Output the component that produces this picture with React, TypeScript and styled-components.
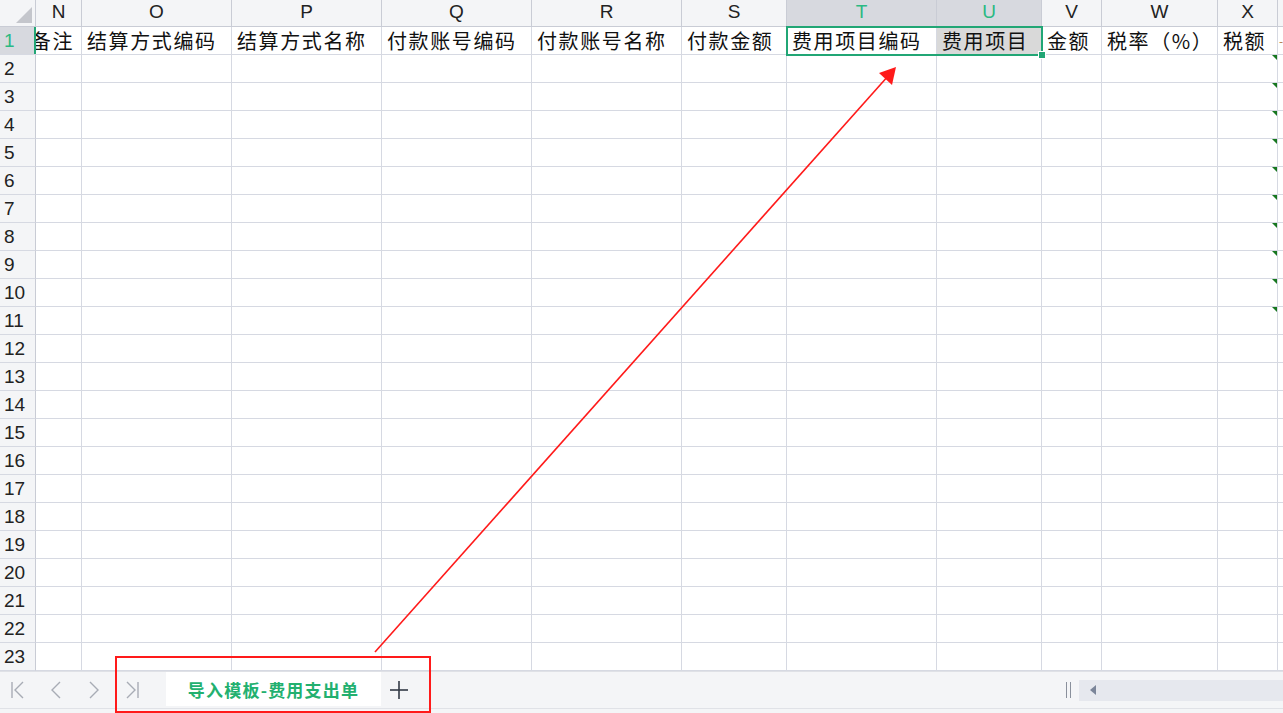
import React from 'react';
import styled, { createGlobalStyle } from 'styled-components';

const GlobalStyle = createGlobalStyle`
  html, body {
    margin: 0;
    padding: 0;
    background: #ffffff;
    overflow: hidden;
  }
`;

const GRID = '#d6d9e2';
const HEAD_BG = '#f4f5f7';
const SEL_HEAD_BG = '#d7d9df';
const GREEN = '#21a675';
const GREEN_TEXT = '#2bb983';

const columns = [
  { key: 'N', width: 46, title: '备注', clipLeft: true },
  { key: 'O', width: 150, title: '结算方式编码' },
  { key: 'P', width: 150, title: '结算方式名称' },
  { key: 'Q', width: 150, title: '付款账号编码' },
  { key: 'R', width: 150, title: '付款账号名称' },
  { key: 'S', width: 105, title: '付款金额' },
  { key: 'T', width: 150, title: '费用项目编码', selected: true },
  { key: 'U', width: 105, title: '费用项目', selected: true, shaded: true },
  { key: 'V', width: 60, title: '金额' },
  { key: 'W', width: 116, title: '税率（%）' },
  { key: 'X', width: 60, title: '税额', flagged: true },
  { key: 'Y', width: 40, title: '-', edge: true },
];

const Page = styled.div`
  position: relative;
  width: 1283px;
  height: 713px;
  overflow: hidden;
  display: flex;
  flex-direction: column;
  background: #ffffff;
`;

const SheetWrap = styled.div`
  position: relative;
  height: 671px;
  overflow: hidden;
`;

const Sheet = styled.div`
  display: grid;
  grid-template-columns: 36px ${columns.map((c) => `${c.width}px`).join(' ')};
  grid-template-rows: 27px repeat(23, 28px);
`;

const Corner = styled.div`
  position: relative;
  background: ${HEAD_BG};
  border-right: 1px solid #c9ccd5;
  border-bottom: 1px solid #c9ccd5;
  box-sizing: border-box;

  &::after {
    content: '';
    position: absolute;
    right: 3px;
    bottom: 3px;
    border-left: 16px solid transparent;
    border-bottom: 16px solid #c4c6cc;
  }
`;

const ColHead = styled.div<{ $selected?: boolean }>`
  display: flex;
  align-items: center;
  justify-content: center;
  padding-bottom: 3px;
  box-sizing: border-box;
  background: ${(p) => (p.$selected ? SEL_HEAD_BG : HEAD_BG)};
  color: ${(p) => (p.$selected ? GREEN_TEXT : '#222222')};
  border-right: 1px solid #c9ccd5;
  border-bottom: 1px solid #c9ccd5;
  font-family: 'Liberation Sans', Arial, sans-serif;
  font-size: 19px;
  overflow: hidden;
`;

const RowHead = styled.div<{ $selected?: boolean }>`
  position: relative;
  display: flex;
  align-items: center;
  padding-left: 4px;
  box-sizing: border-box;
  background: ${(p) => (p.$selected ? SEL_HEAD_BG : HEAD_BG)};
  color: ${(p) => (p.$selected ? GREEN_TEXT : '#222222')};
  border-right: 1px solid #c9ccd5;
  border-bottom: 1px solid ${GRID};
  font-family: 'Liberation Sans', Arial, sans-serif;
  font-size: 19px;

  ${(p) =>
    p.$selected &&
    `
    &::after {
      content: '';
      position: absolute;
      right: -1px;
      top: 0;
      bottom: 0;
      width: 2px;
      background: ${GREEN};
    }
  `}
`;

const Cell = styled.div<{
  $shaded?: boolean;
  $flag?: boolean;
  $clipLeft?: boolean;
  $edge?: boolean;
}>`
  position: relative;
  display: flex;
  align-items: center;
  justify-content: ${(p) => (p.$clipLeft ? 'flex-end' : 'flex-start')};
  padding: 0 ${(p) => (p.$clipLeft ? '7px' : p.$edge ? '1px' : '5px')};
  box-sizing: border-box;
  background: ${(p) => (p.$shaded ? '#d9d9d9' : '#ffffff')};
  border-right: 1px solid ${GRID};
  border-bottom: 1px solid ${GRID};
  font-family: 'Noto Sans CJK SC', 'Liberation Sans', sans-serif;
  font-size: ${(p) => (p.$edge ? '12px' : '20px')};
  letter-spacing: ${(p) => (p.$edge ? '0' : '1.6px')};
  color: ${(p) => (p.$edge ? '#b07840' : '#111111')};
  white-space: nowrap;
  overflow: hidden;

  ${(p) =>
    p.$flag &&
    `
    &::after {
      content: '';
      position: absolute;
      top: 0;
      right: 0;
      border-left: 5px solid transparent;
      border-top: 5px solid #17771f;
    }
  `}
`;

const Selection = styled.div`
  position: absolute;
  left: 786px;
  top: 26px;
  width: 257px;
  height: 30px;
  box-sizing: border-box;
  border: 2px solid ${GREEN};
  pointer-events: none;

  &::after {
    content: '';
    position: absolute;
    right: -5px;
    bottom: -5px;
    width: 6px;
    height: 6px;
    background: ${GREEN};
    border: 1px solid #ffffff;
  }
`;

const TabBar = styled.div`
  display: flex;
  align-items: stretch;
  height: 37px;
  box-sizing: border-box;
  background: #f4f5f7;
  border-top: 1px solid #dfe1e6;
`;

const NavGroup = styled.div`
  display: flex;
  align-items: center;
  width: 166px;
  padding-left: 9px;
  box-sizing: border-box;
  gap: 20px;
`;

const NavButton = styled.span`
  display: inline-flex;
  width: 18px;
  height: 22px;
  align-items: center;
  justify-content: center;
`;

const SheetTab = styled.div`
  display: flex;
  align-items: center;
  justify-content: center;
  width: 215px;
  margin-bottom: 2px;
  background: #ffffff;
  color: #22b06f;
  font-family: 'Noto Sans CJK SC', 'Liberation Sans', sans-serif;
  font-weight: 700;
  font-size: 17px;
  letter-spacing: 1.2px;
`;

const AddButton = styled.span`
  display: inline-flex;
  align-items: center;
  justify-content: center;
  width: 36px;
`;

const Spacer = styled.div`
  flex: 1;
`;

const Splitter = styled.div`
  display: flex;
  align-items: center;
  gap: 3px;
  margin-right: 8px;
  span {
    width: 1px;
    height: 16px;
    background: #8a909c;
  }
`;

const ScrollTrack = styled.div`
  align-self: center;
  width: 204px;
  height: 21px;
  background: #e6e8ee;
  display: flex;
  align-items: center;
  padding-left: 10px;
  box-sizing: border-box;
`;

const StatusStrip = styled.div`
  flex: 1;
  background: #f4f5f7;
  border-top: 1px solid #e0e2e7;
`;

const Annotation = styled.svg`
  position: absolute;
  left: 0;
  top: 0;
  pointer-events: none;
`;

const navStroke = '#a8acb5';

function NavIcon({ kind }: { kind: 'first' | 'prev' | 'next' | 'last' }) {
  return (
    <svg width="18" height="22" viewBox="0 0 18 22">
      {kind === 'first' && (
        <>
          <line x1="3" y1="3" x2="3" y2="19" stroke={navStroke} strokeWidth="1.4" />
          <polyline points="14,3 6,11 14,19" fill="none" stroke={navStroke} strokeWidth="1.4" />
        </>
      )}
      {kind === 'prev' && <polyline points="13,3 5,11 13,19" fill="none" stroke={navStroke} strokeWidth="1.4" />}
      {kind === 'next' && <polyline points="5,3 13,11 5,19" fill="none" stroke={navStroke} strokeWidth="1.4" />}
      {kind === 'last' && (
        <>
          <polyline points="4,3 12,11 4,19" fill="none" stroke={navStroke} strokeWidth="1.4" />
          <line x1="15" y1="3" x2="15" y2="19" stroke={navStroke} strokeWidth="1.4" />
        </>
      )}
    </svg>
  );
}

export default function App() {
  const rows = Array.from({ length: 23 }, (_, i) => i + 1);

  return (
    <Page>
      <GlobalStyle />
      <SheetWrap>
        <Sheet>
          <Corner />
          {columns.map((c) => (
            <ColHead key={c.key} $selected={c.selected}>
              {c.edge ? '' : c.key}
            </ColHead>
          ))}
          {rows.map((r) => (
            <React.Fragment key={r}>
              <RowHead $selected={r === 1}>{r}</RowHead>
              {columns.map((c) => (
                <Cell
                  key={c.key}
                  $shaded={r === 1 && c.shaded}
                  $flag={c.flagged && r >= 2 && r <= 11}
                  $clipLeft={c.clipLeft}
                  $edge={c.edge}
                >
                  {r === 1 ? c.title : ''}
                </Cell>
              ))}
            </React.Fragment>
          ))}
        </Sheet>
        <Selection />
      </SheetWrap>

      <TabBar>
        <NavGroup>
          <NavButton>
            <NavIcon kind="first" />
          </NavButton>
          <NavButton>
            <NavIcon kind="prev" />
          </NavButton>
          <NavButton>
            <NavIcon kind="next" />
          </NavButton>
          <NavButton>
            <NavIcon kind="last" />
          </NavButton>
        </NavGroup>
        <SheetTab>导入模板-费用支出单</SheetTab>
        <AddButton>
          <svg width="20" height="20" viewBox="0 0 20 20">
            <line x1="10" y1="1" x2="10" y2="19" stroke="#333a45" strokeWidth="1.6" />
            <line x1="1" y1="10" x2="19" y2="10" stroke="#333a45" strokeWidth="1.6" />
          </svg>
        </AddButton>
        <Spacer />
        <Splitter>
          <span />
          <span />
        </Splitter>
        <ScrollTrack>
          <svg width="8" height="10" viewBox="0 0 8 10">
            <polygon points="7,0 1,5 7,10" fill="#7b8599" />
          </svg>
        </ScrollTrack>
      </TabBar>
      <StatusStrip />

      <Annotation width="1283" height="713" viewBox="0 0 1283 713">
        <rect x="116" y="657" width="314" height="55" fill="none" stroke="#ff1a1a" strokeWidth="2" />
        <line x1="375" y1="652" x2="889" y2="75" stroke="#ff1a1a" strokeWidth="1.6" />
        <polygon points="896,67 892,85 879,73" fill="#ff1a1a" />
      </Annotation>
    </Page>
  );
}
